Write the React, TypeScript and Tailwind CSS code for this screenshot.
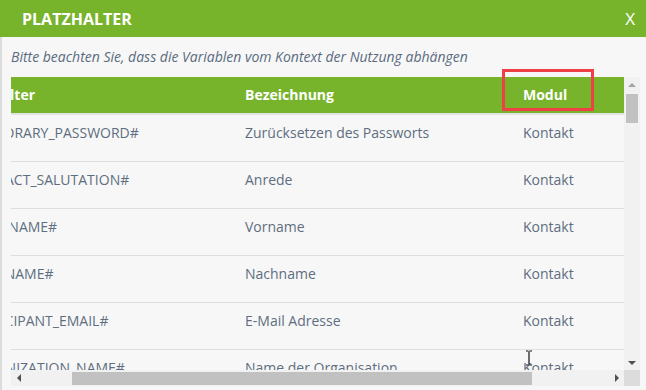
const rows = [
  { key: "#TEMPORARY_PASSWORD#", label: "Zurücksetzen des Passworts", module: "Kontakt" },
  { key: "#CONTACT_SALUTATION#", label: "Anrede", module: "Kontakt" },
  { key: "#FIRST_NAME#", label: "Vorname", module: "Kontakt" },
  { key: "#LAST_NAME#", label: "Nachname", module: "Kontakt" },
  { key: "#PARTICIPANT_EMAIL#", label: "E-Mail Adresse", module: "Kontakt" },
  { key: "#ORGANIZATION_NAME#", label: "Name der Organisation", module: "Kontakt" },
  { key: "#ORGANIZATION_STREET#", label: "Straße der Organisation", module: "Kontakt" },
];

const Arrow = ({ dir, color }: { dir: "up" | "down" | "left" | "right"; color: string }) => {
  const pts = {
    up: "0,5 4,1 8,5",
    down: "0,1 8,1 4,5",
    left: "5,0 5,8 1,4",
    right: "1,0 1,8 5,4",
  }[dir];
  const horiz = dir === "left" || dir === "right";
  return (
    <svg width={horiz ? 6 : 8} height={horiz ? 8 : 6} viewBox={horiz ? "0 0 6 8" : "0 0 8 6"}>
      <polygon points={pts} fill={color} />
    </svg>
  );
};

export default function App() {
  return (
    <div className="relative w-[646px] h-[390px] overflow-hidden bg-[#f7f7f7] font-['Open_Sans',sans-serif] flex flex-col">
      <div className="h-[37px] shrink-0 bg-[#78b32c] flex items-center justify-between pl-[22px] pr-[11px] text-white">
        <span className="text-[16px] font-bold">PLATZHALTER</span>
        <span className="text-[17px]">X</span>
      </div>

      <div className="flex-1 flex flex-col border-l-2 border-[#dcdcdc] pl-[9px]">
        <p className="mt-[10px] h-[20px] text-[14px] leading-[20px] italic text-[#5a6b80]">
          Bitte beachten Sie, dass die Variablen vom Kontext der Nutzung abhängen
        </p>

        <div className="mt-[10px] flex flex-col w-[629px]">
          <div className="flex h-[293px]">
            <div className="w-[613px] overflow-hidden">
              <div className="ml-[-67px] w-[790px] text-[14px] leading-[20px]">
                <div className="flex h-[38px] items-center bg-[#78b32c] border-b-2 border-[#e3e3e3] font-bold text-white">
                  <div className="w-[287px] pl-[14px]">Platzhalter</div>
                  <div className="w-[278px] pl-[14px]">Bezeichnung</div>
                  <div className="w-[225px] pl-[14px]">Modul</div>
                </div>
                {rows.map(({ key, label, module }) => (
                  <div key={key} className="flex h-[47px] pt-[8px] border-b border-[#dedede] text-[#5e6e80] whitespace-nowrap">
                    <div className="w-[287px] pl-[14px]">{key}</div>
                    <div className="w-[278px] pl-[14px]">{label}</div>
                    <div className="w-[225px] pl-[14px]">{module}</div>
                  </div>
                ))}
              </div>
            </div>
            <div className="w-[16px] bg-[#f1f1f1] flex flex-col items-center">
              <div className="h-[15px] flex items-center justify-center">
                <Arrow dir="up" color="#a3a3a3" />
              </div>
              <div className="mt-[2px] w-[12px] h-[29px] bg-[#c1c1c1]" />
              <div className="flex-1" />
              <div className="h-[15px] flex items-center justify-center">
                <Arrow dir="down" color="#505050" />
              </div>
            </div>
          </div>
          <div className="flex h-[16px]">
            <div className="w-[613px] bg-[#f1f1f1] flex items-center">
              <div className="w-[15px] h-full flex items-center justify-center">
                <Arrow dir="left" color="#505050" />
              </div>
              <div className="ml-[46px] w-[460px] h-[13px] bg-[#c1c1c1]" />
              <div className="flex-1" />
              <div className="w-[15px] h-full flex items-center justify-center">
                <Arrow dir="right" color="#505050" />
              </div>
            </div>
            <div className="w-[16px] bg-[#dcdcdc]" />
          </div>
        </div>
      </div>

      <div className="absolute left-[502px] top-[69px] w-[92px] h-[42px] border-[3px] border-[#ef4048]" />

      <svg className="absolute left-[525px] top-[350px]" width="8" height="16" viewBox="0 0 8 16">
        <path d="M1 1h2.5M4.5 1H7M4 1.5v13M1 15h2.5M4.5 15H7" stroke="#111" strokeWidth="1.2" fill="none" />
      </svg>
    </div>
  );
}
